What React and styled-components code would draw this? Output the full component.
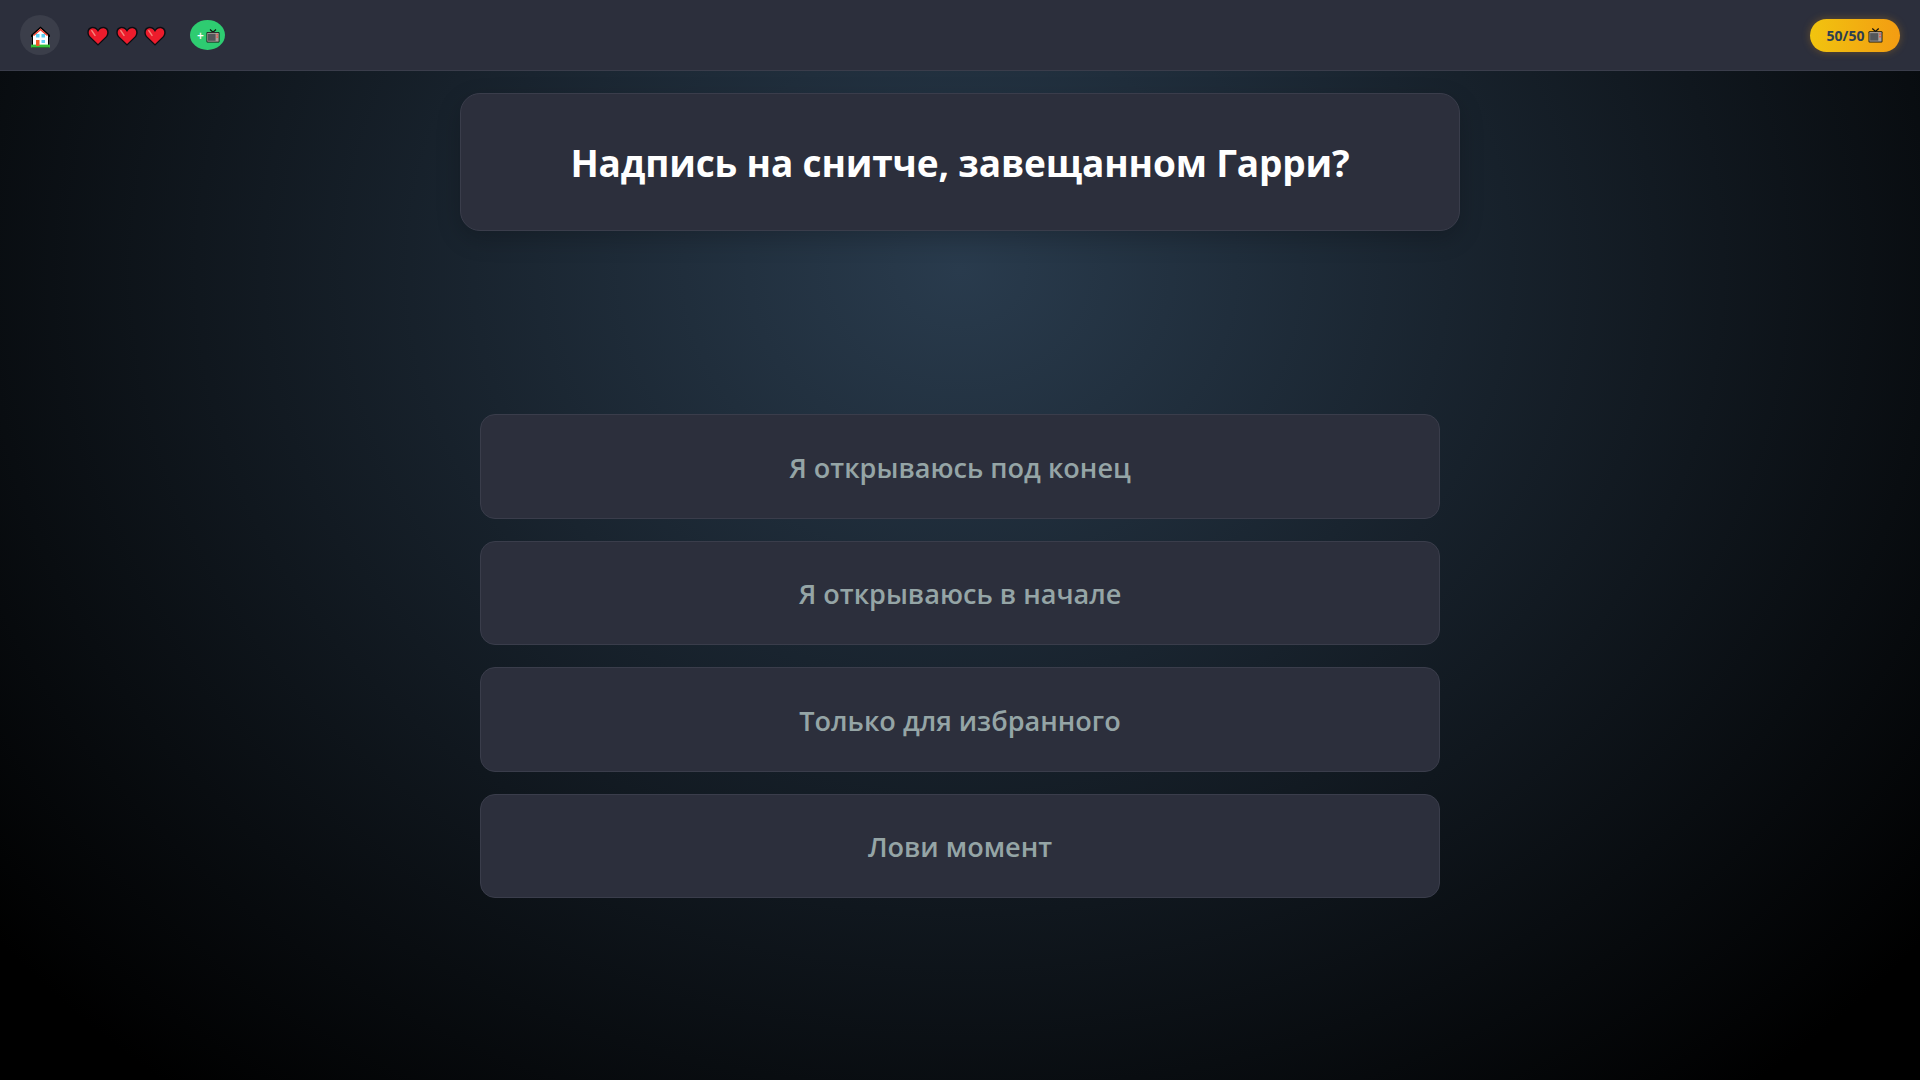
import React from "react";
import styled, { createGlobalStyle } from "styled-components";

const GlobalStyle = createGlobalStyle`
  html, body {
    margin: 0;
    height: 100%;
    background: #000;
    font-family: "Open Sans", "Noto Sans", sans-serif;
  }
`;

const Page = styled.div`
  width: 1920px;
  height: 1080px;
  overflow: hidden;
  display: flex;
  flex-direction: column;
  background: radial-gradient(ellipse at 50% 25%, #293b4d 0%, #000 92%);
`;

const TopBar = styled.header`
  height: 71px;
  flex: none;
  box-sizing: border-box;
  display: flex;
  align-items: center;
  justify-content: space-between;
  padding: 0 20px;
  background: #2c2f3c;
  border-bottom: 1px solid #3a3d4b;
`;

const LeftGroup = styled.div`
  display: flex;
  align-items: center;
`;

const HomeButton = styled.button`
  width: 40px;
  height: 40px;
  padding: 3px 0 0;
  border: none;
  border-radius: 50%;
  background: #3b3e4a;
  display: flex;
  align-items: center;
  justify-content: center;
`;

const Hearts = styled.div`
  display: flex;
  gap: 6.5px;
  margin: 2px 0 0 27px;
`;

const AdButton = styled.button`
  width: 35px;
  height: 30px;
  margin-left: 24px;
  padding: 1px 0 0 2px;
  border: none;
  border-radius: 50%;
  background: #2ecc71;
  color: #fff;
  display: flex;
  align-items: center;
  justify-content: center;
  gap: 2px;
  font: 600 12px "Open Sans", sans-serif;
`;

const Energy = styled.div`
  width: 90px;
  height: 33px;
  box-sizing: border-box;
  display: flex;
  align-items: center;
  justify-content: center;
  gap: 4px;
  border-radius: 17px;
  background: linear-gradient(90deg, #f1c40f, #f39c12);
  box-shadow: 0 0 8px rgba(243, 156, 18, 0.3);
  color: #2c3e50;
  font-size: 14px;
  font-weight: 700;
`;

const Main = styled.main`
  display: flex;
  flex-direction: column;
  align-items: center;
  padding-top: 22px;
`;

const QuestionCard = styled.div`
  width: 1000px;
  height: 138px;
  box-sizing: border-box;
  display: flex;
  align-items: center;
  justify-content: center;
  background: #2c2f3c;
  border: 1px solid #3a3d4b;
  border-radius: 20px;
  box-shadow: 0 8px 24px rgba(0, 0, 0, 0.2);
`;

const QuestionText = styled.h1`
  margin: 1px 0 0;
  color: #fff;
  font-size: 37px;
  font-weight: 700;
  letter-spacing: -0.15px;
`;

const Answers = styled.div`
  width: 960px;
  margin-top: 183px;
  display: flex;
  flex-direction: column;
  gap: 22px;
`;

const AnswerButton = styled.button`
  height: 104.5px;
  box-sizing: border-box;
  padding: 2px 0 0;
  background: #2c2f3c;
  border: 1px solid #3a3d4b;
  border-radius: 15px;
  color: #95a5a6;
  font-family: inherit;
  font-size: 27.1px;
  font-weight: 600;
`;

const HomeIcon = () => (
  <svg width="21" height="22" viewBox="0 0 21 22">
    <path d="M10.5 .4 L20 9 V11 H19 V21.5 H2 V11 H1 V9 Z" fill="#000" />
    <path d="M10.5 2.4 L18 9.2 V20 H3 V9.2 Z" fill="#fff" />
    <path d="M10.5 2.4 L18 9.2 L17 10 L10.5 4.6 L4 10 L3 9.2 Z" fill="#ee3b2b" />
    <rect x="1" y="18.6" width="19" height="2.9" fill="#34c23a" />
    <rect x="6" y="8" width="3.5" height="3.5" fill="#5fd0f5" />
    <rect x="11.5" y="8" width="3.5" height="3.5" fill="#5fd0f5" />
    <rect x="11.5" y="14" width="3.5" height="3" fill="#5fd0f5" />
    <rect x="6" y="14" width="3.5" height="6" fill="#f05a28" />
  </svg>
);

const HeartIcon = () => (
  <svg width="22" height="20" viewBox="0 0 22 20">
    <path d="M11 19.8 L2 11 C-1 7 0 1.5 5 .8 C7.5 .5 10 1.8 11 3.8 C12 1.8 14.5 .5 17 .8 C22 1.5 23 7 20 11 Z" fill="#0d0d12" />
    <path d="M11 18 L3 10.2 C.8 7 1.6 2.8 5.2 2.2 C7.6 1.9 10 3.4 11 6 C12 3.4 14.4 1.9 16.8 2.2 C20.4 2.8 21.2 7 19 10.2 Z" fill="#ed1c2c" />
    <path d="M4.8 4.6 L8 9.4" stroke="#f5857a" strokeWidth="1.5" strokeLinecap="round" />
  </svg>
);

const TvIcon = ({ size = 14 }) => (
  <svg width={size} height={size} viewBox="0 0 14 14">
    <path d="M4 .5 L7 3.2 L10 .5" fill="none" stroke="#111" strokeWidth="1.2" />
    <rect x=".5" y="3" width="13" height="10.5" rx="1" fill="#111" />
    <rect x="1.3" y="3.8" width="11.4" height="8.9" fill="#a9a19a" />
    <rect x="2" y="4.8" width="7.6" height="7" fill="#53565a" />
    <rect x="10.4" y="5" width="1.7" height="1.4" fill="#e8564a" />
    <rect x="10.4" y="7.4" width="1.7" height="1.4" fill="#e8564a" />
  </svg>
);

const answers = [
  "Я открываюсь под конец",
  "Я открываюсь в начале",
  "Только для избранного",
  "Лови момент",
];

export default function App() {
  return (
    <Page>
      <GlobalStyle />
      <TopBar>
        <LeftGroup>
          <HomeButton><HomeIcon /></HomeButton>
          <Hearts>
            <HeartIcon />
            <HeartIcon />
            <HeartIcon />
          </Hearts>
          <AdButton>+<TvIcon /></AdButton>
        </LeftGroup>
        <Energy>50/50 <TvIcon size={15} /></Energy>
      </TopBar>
      <Main>
        <QuestionCard>
          <QuestionText>Надпись на снитче, завещанном Гарри?</QuestionText>
        </QuestionCard>
        <Answers>
          {answers.map((a) => (
            <AnswerButton key={a}>{a}</AnswerButton>
          ))}
        </Answers>
      </Main>
    </Page>
  );
}
